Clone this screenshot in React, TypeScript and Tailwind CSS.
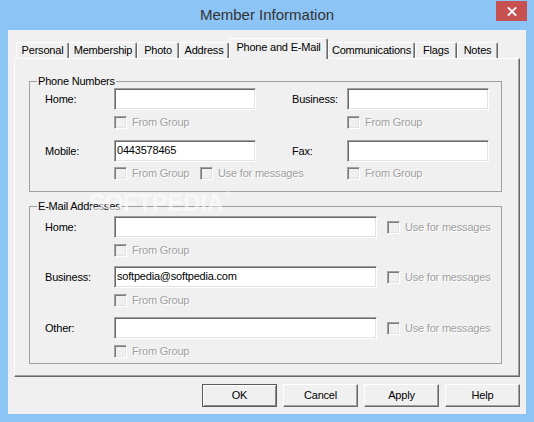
import React from "react";

function Checkbox({ label }: { label: string }) {
  return (
    <div className="flex items-center h-[13px] shrink-0">
      <span className="block box-border w-[13px] h-[13px] border border-t-[#a0a0a0] border-l-[#a0a0a0] border-r-white border-b-white shadow-[inset_1px_1px_0_#7a7a7a,inset_-1px_-1px_0_#e3e3e3] bg-[#f0f0f0]" />
      <span className="ml-[5px] leading-[13px] text-[#a0a0a0] whitespace-nowrap text-shadow-[1px_1px_0_#ffffff]">
        {label}
      </span>
    </div>
  );
}

function Field({ value = "", className }: { value?: string; className: string }) {
  return (
    <div
      className={`${className} h-[22px] shrink-0 box-border border border-t-[#a0a0a0] border-l-[#a0a0a0] border-r-white border-b-white shadow-[inset_1px_1px_0_#696969,inset_-1px_-1px_0_#e3e3e3] bg-white flex items-center pl-[2px] pb-[1px] text-black whitespace-nowrap overflow-hidden`}
    >
      {value}
    </div>
  );
}

function Tab({ label, w, selected = false }: { label: string; w: string; selected?: boolean }) {
  if (selected) {
    return (
      <div
        className={`${w} h-[21px] -mb-[1px] relative z-10 shrink-0 box-border bg-[#f0f0f0] border-l border-t border-r border-l-white border-t-white border-r-[#696969] rounded-t-[2px] shadow-[inset_-1px_0_0_#a0a0a0] flex items-center justify-center pb-[3px] text-black whitespace-nowrap`}
      >
        {label}
      </div>
    );
  }
  return (
    <div
      className={`${w} h-[16px] shrink-0 box-border bg-[#f0f0f0] border-l border-t border-r border-l-white border-t-white border-r-[#696969] rounded-t-[2px] shadow-[inset_-1px_0_0_#a0a0a0] flex items-center justify-center text-black whitespace-nowrap`}
    >
      {label}
    </div>
  );
}

function Button({ label, isDefault = false }: { label: string; isDefault?: boolean }) {
  const cls = isDefault
    ? "border border-[#5a5a5a] shadow-[inset_1px_1px_0_#ffffff,inset_-1px_-1px_0_#8a8a8a]"
    : "border border-t-white border-l-white border-r-[#696969] border-b-[#696969] shadow-[inset_-1px_-1px_0_#a0a0a0]";
  return (
    <div
      className={`w-[75px] h-[23px] box-border bg-[#f0f0f0] ${cls} flex items-center justify-center text-black`}
    >
      {label}
    </div>
  );
}

export default function App() {
  return (
    <div className="w-[534px] h-[422px] bg-[#8cc4f5] flex flex-col font-['Liberation_Sans',Arial,sans-serif] text-[11px] tracking-[-0.2px] text-black overflow-hidden">
      {/* Title bar */}
      <div className="h-[30px] grid grid-cols-[1fr_auto_1fr] shrink-0">
        <div />
        <div className="leading-[30px] text-[15px] tracking-normal text-[#333333] pb-[2px]">
          Member Information
        </div>
        <div className="flex justify-end items-start pt-[1px] pr-[7px]">
          <div className="w-[31px] h-[20px] bg-[#c75050] flex items-center justify-center">
            <svg width="10" height="9" viewBox="0 0 10 9">
              <path d="M1.5 1 L8.5 8 M8.5 1 L1.5 8" stroke="#ffffff" strokeWidth="1.8" strokeLinecap="square" fill="none" />
            </svg>
          </div>
        </div>
      </div>

      {/* Client area */}
      <div className="mx-[8px] h-[384px] bg-[#f0f0f0] flex flex-col">
        {/* Tabs */}
        <div className="h-[28px] flex items-end pl-[8px] shrink-0">
          <Tab label="Personal" w="w-[53px]" />
          <Tab label="Membership" w="w-[68px]" />
          <Tab label="Photo" w="w-[42px]" />
          <Tab label="Address" w="w-[50px]" />
          <Tab label="Phone and E-Mail" w="w-[99px]" selected />
          <Tab label="Communications" w="w-[87px]" />
          <Tab label="Flags" w="w-[42px]" />
          <Tab label="Notes" w="w-[41px]" />
        </div>

        {/* Panel */}
        <div className="relative mx-[6px] h-[319px] box-border border border-t-white border-l-white border-r-[#696969] border-b-[#696969] shadow-[inset_-1px_-1px_0_#a0a0a0] pl-[14px] pr-[17px] pt-[22px] shrink-0">
          {/* Phone Numbers */}
          <div className="border border-[#a0a0a0] pl-[15px] pb-[11px]">
            <div className="-mt-[7px] -ml-[8px] px-[1px] w-fit bg-[#f0f0f0] leading-[13px]">
              Phone Numbers
            </div>
            <div className="flex items-center">
              <div className="w-[69px] shrink-0">Home:</div>
              <Field className="w-[142px]" />
              <div className="w-[36px] shrink-0" />
              <div className="w-[55px] shrink-0">Business:</div>
              <Field className="w-[142px]" />
            </div>
            <div className="flex items-center mt-[6px]">
              <div className="w-[69px] shrink-0" />
              <div className="w-[233px] shrink-0">
                <Checkbox label="From Group" />
              </div>
              <Checkbox label="From Group" />
            </div>
            <div className="flex items-center mt-[11px]">
              <div className="w-[69px] shrink-0">Mobile:</div>
              <Field className="w-[142px]" value="0443578465" />
              <div className="w-[36px] shrink-0" />
              <div className="w-[55px] shrink-0">Fax:</div>
              <Field className="w-[142px]" />
            </div>
            <div className="flex items-center mt-[5px]">
              <div className="w-[69px] shrink-0" />
              <div className="w-[86px] shrink-0">
                <Checkbox label="From Group" />
              </div>
              <div className="w-[147px] shrink-0">
                <Checkbox label="Use for messages" />
              </div>
              <Checkbox label="From Group" />
            </div>
          </div>

          {/* E-Mail Addresses */}
          <div className="mt-[14px] border border-[#a0a0a0] pl-[15px] pb-[5px]">
            <div className="-mt-[7px] -ml-[8px] px-[1px] w-fit bg-[#f0f0f0] leading-[13px]">
              E-Mail Addresses
            </div>
            <div className="flex items-center mt-[3px]">
              <div className="w-[69px] shrink-0">Home:</div>
              <Field className="w-[263px]" />
              <div className="ml-[10px]">
                <Checkbox label="Use for messages" />
              </div>
            </div>
            <div className="flex items-center mt-[6px]">
              <div className="w-[69px] shrink-0" />
              <Checkbox label="From Group" />
            </div>
            <div className="flex items-center mt-[9px]">
              <div className="w-[69px] shrink-0">Business:</div>
              <Field className="w-[263px]" value="softpedia@softpedia.com" />
              <div className="ml-[10px]">
                <Checkbox label="Use for messages" />
              </div>
            </div>
            <div className="flex items-center mt-[6px]">
              <div className="w-[69px] shrink-0" />
              <Checkbox label="From Group" />
            </div>
            <div className="flex items-center mt-[10px]">
              <div className="w-[69px] shrink-0">Other:</div>
              <Field className="w-[263px]" />
              <div className="ml-[10px]">
                <Checkbox label="Use for messages" />
              </div>
            </div>
            <div className="flex items-center mt-[6px]">
              <div className="w-[69px] shrink-0" />
              <Checkbox label="From Group" />
            </div>
          </div>

          {/* Watermark */}
          <div className="absolute left-[74px] top-[130px] pointer-events-none select-none flex items-start text-white/60 font-['Liberation_Sans',Arial,sans-serif] font-bold text-[24px] tracking-[-0.3px] leading-[28px]">
            SOFTPEDIA
            <span className="text-[8px] leading-[9px] ml-[1px] mt-[1px] font-normal">®</span>
          </div>
        </div>

        {/* Buttons */}
        <div className="mt-[7px] flex justify-end gap-[6px] pr-[6px]">
          <Button label="OK" isDefault />
          <Button label="Cancel" />
          <Button label="Apply" />
          <Button label="Help" />
        </div>
      </div>
    </div>
  );
}
